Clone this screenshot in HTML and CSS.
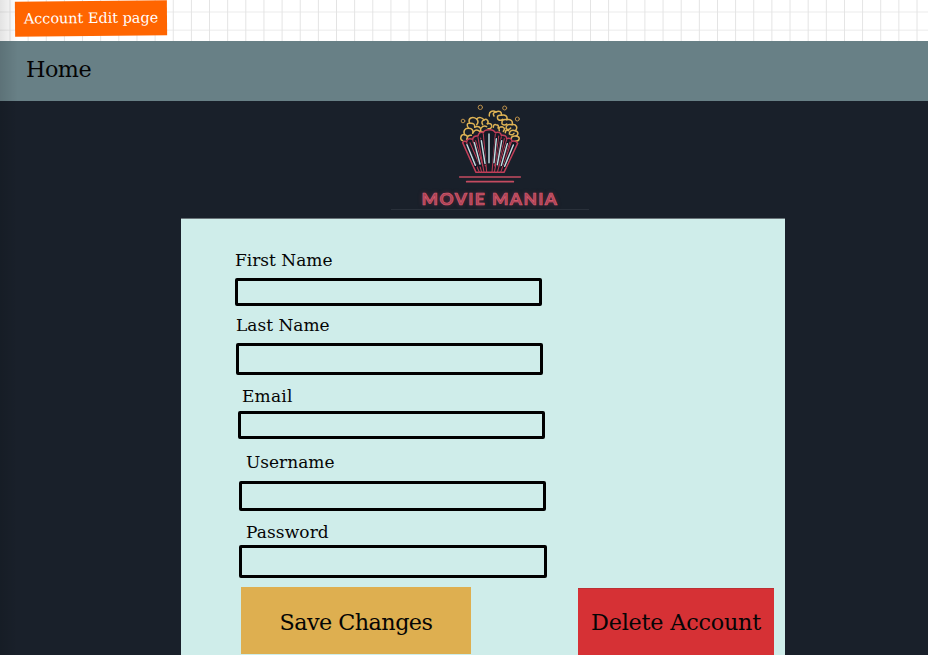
FILE: index.html
```html
<!DOCTYPE html>
<html lang="en">
<head>
<meta charset="utf-8">
<title>Account Edit page</title>
<link rel="stylesheet" href="styles.css">
</head>
<body>
<div class="page">
  <div class="canvas"><div class="tag">Account Edit page</div></div>
  <header class="nav"><a class="home">Home</a></header>
  <main class="main">
    <div class="brand">
      <svg class="logo" viewBox="0 9 300 261" fill="none" stroke-linecap="round" stroke-linejoin="round">
        <g stroke="#b98f4b" stroke-width="3">
          <circle cx="121" cy="28" r="6.5"/><circle cx="194" cy="30" r="6"/><circle cx="69" cy="69" r="5.5"/><circle cx="232" cy="63" r="6"/>
        </g>
        <g stroke="#deb355" stroke-width="4.5">
          <path d="M68 128C58 124 62 108 74 110C68 98 76 90 86 91C78 80 82 74 89 76C82 60 98 54 110 63C116 56 128 58 132 66C140 60 148 70 142 77"/>
          <path d="M74 110Q86 112 80 124M86 91Q102 92 98 106M89 76Q106 74 104 88M110 63Q118 72 110 80M132 66Q122 70 128 80M82 122Q82 110 94 112M98 106Q104 92 116 98Q124 104 116 112M104 88Q116 82 122 92Q130 80 140 86M122 92Q120 104 132 102M142 77Q156 74 155 86Q152 94 144 92"/>
          <path d="M148 54C146 40 158 36 168 42C178 36 186 42 184 52C196 48 204 56 200 65C212 62 220 70 216 80C230 78 234 90 226 98C238 102 234 112 228 114C242 116 240 130 226 130"/>
          <path d="M168 42Q156 44 162 54M184 52Q168 50 174 64Q182 70 188 64M200 65Q184 62 186 78Q194 84 200 78M216 80Q198 76 198 92Q206 98 212 90M226 98Q208 94 208 108Q216 114 222 106M228 114Q212 112 214 126"/>
          <path d="M160 88Q160 78 168 80Q178 80 174 90M178 98Q174 86 186 86Q198 90 190 100M196 104Q196 94 206 98"/>
        </g>
        <path d="M68 134 108 223H192L233 136Q228 126 216 130Q214 118 200 122Q200 110 184 112Q182 100 166 104Q162 94 147 95Q132 95 130 104Q116 100 114 114Q100 112 98 124Q82 118 80 132Q74 126 68 134Z" fill="#151a25" stroke="#c23f59" stroke-width="4.5"/>
        <path d="M80 134 118 223M98 126 125 223M114 118 132 223M130 108 140 223M166 108 156 223M184 116 163 223M200 125 172 223M214 132 182 223M90 134 120 204M107 128 128 204M122 120 136 204M176 114 164 204M193 122 174 204M210 132 182 204" stroke="#b53b53" stroke-width="3.2"/>
        <path d="m82 142 25 62M104 138l17 64M124 128l11 68M147 108v86M169 122l-7 72M185 128l-13 72M202 137l-18 65M220 141l-26 64" stroke="#0d1722" stroke-width="8"/>
        <path d="m81 140 25 62M103 134l17 64M124 128l11 68M147 108v86M169 122l-7 72M185 128l-13 72M202 137l-18 65M220 141l-26 64" stroke="#c5dbe1" stroke-width="4.4"/>
        <path d="M59 237h182M80 251h140" stroke="#c44b60" stroke-width="5"/>
      </svg>
      <div class="brand-name">MOVIE MANIA</div>
    </div>
    <form class="card">
      <div class="field first"><label for="first">First Name</label><input id="first" type="text"></div>
      <div class="field last"><label for="last">Last Name</label><input id="last" type="text"></div>
      <div class="field email"><label for="email">Email</label><input id="email" type="text"></div>
      <div class="field user"><label for="user">Username</label><input id="user" type="text"></div>
      <div class="field pass"><label for="pass">Password</label><input id="pass" type="password"></div>
      <div class="actions">
        <button class="save" type="button">Save Changes</button>
        <button class="delete" type="button">Delete Account</button>
      </div>
    </form>
  </main>
</div>
</body>
</html>
```
FILE: styles.css
```css
* { box-sizing: border-box; }
body { margin: 0; font-family: "DejaVu Serif", serif; color: #050505; }
.page { position: relative; width: 928px; height: 655px; overflow: hidden; background: #19202a; }
.page::after {
  content: "";
  position: absolute;
  inset: 0 auto 0 0;
  width: 18px;
  background: linear-gradient(90deg, rgba(0,0,0,.11), rgba(0,0,0,0));
  pointer-events: none;
}
.canvas {
  height: 41px;
  padding: 1px 0 0 15px;
  background-color: #fff;
  background-image:
    linear-gradient(90deg, #e3e3e3 1px, transparent 1px),
    linear-gradient(#eaeaea 1px, transparent 1px);
  background-size: 18.15px 18.15px;
  background-position: 9.5px 11.5px;
}
.tag {
  width: 152px;
  height: 35px;
  background: #ff6500;
  color: #fff;
  font-size: 14.4px;
  line-height: 34px;
  text-align: center;
  white-space: nowrap;
  transform: rotate(-.5deg);
}
.nav { height: 60px; padding-left: 26px; background: #688086; }
.home { display: block; font-size: 22.3px; line-height: 57px; letter-spacing: -.5px; }
.main { display: flex; flex-direction: column; }
.brand { display: flex; flex-direction: column; align-items: center; width: 198px; height: 117px; margin-left: 391px; }
.logo { width: 100px; height: 87px; flex: none; }
.brand-name {
  width: 198px;
  height: 22px;
  border-bottom: 1px solid #29303a;
  font: 700 17.5px/22px Lato, sans-serif;
  letter-spacing: 1.4px;
  text-align: center;
  white-space: nowrap;
  color: #a84356;
  -webkit-text-stroke: .7px #dc5c70;
  text-shadow: 0 0 4px rgba(190,45,75,.5);
}
.card {
  width: 604px;
  height: 437px;
  margin-left: 181px;
  padding-top: 31px;
  border-top: 1px solid #6a7479;
  background: #cfedea;
}
.field { display: flex; flex-direction: column; align-items: flex-start; }
.field label { font-size: 17px; line-height: 20px; }
.field input {
  width: 307px;
  padding: 0 8px;
  border: 3px solid #000;
  border-radius: 2px;
  background: transparent;
  font: inherit;
  outline: none;
}
.first { margin-left: 54px; }
.first input { height: 28px; margin-top: 8px; }
.last { margin: 9px 0 0 55px; }
.last input { height: 32px; margin-top: 8px; }
.email { margin: 11px 0 0 57px; }
.email label { margin-left: 4px; letter-spacing: .2px; }
.email input { height: 28px; margin-top: 5px; }
.user { margin: 13px 0 0 58px; }
.user label { margin-left: 7px; }
.user input { height: 30px; margin-top: 9px; }
.pass { margin: 11px 0 0 58px; }
.pass label { margin-left: 7px; letter-spacing: .1px; }
.pass input { width: 308px; height: 33px; margin-top: 3px; }
.actions { display: flex; justify-content: space-between; margin: 9px 11px 0 60px; }
.actions button { height: 67px; padding: 2px 0 0; border: 0; color: #050505; font: 22.3px "DejaVu Serif", serif; white-space: nowrap; }
.actions .save { width: 230px; background: #deaf50; letter-spacing: -.55px; }
.actions .delete { width: 196px; margin-top: 1px; padding-top: 1px; background: #d63135; letter-spacing: -.2px; box-shadow: inset 0 1px #bb3034; }
```
